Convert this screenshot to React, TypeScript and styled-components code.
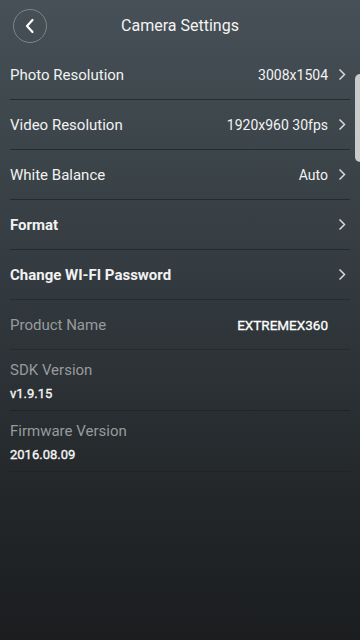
import * as React from 'react';
import styled, { createGlobalStyle } from 'styled-components';

const GlobalStyle = createGlobalStyle`
  html, body {
    margin: 0;
    padding: 0;
    background: #1c1e20;
  }
  body {
    font-family: Roboto, "Noto Sans", sans-serif;
  }
`

const Screen = styled.div`
  position: relative;
  width: 360px;
  height: 640px;
  overflow: hidden;
  background: linear-gradient(180deg, #465056 0%, #353d42 40%, #24282b 75%, #1b1d1f 100%);
  color: #f2f2f2;
`

const Header = styled.div`
  height: 50px;
  display: flex;
  align-items: center;
  justify-content: center;
  position: relative;
`

const BackButton = styled.div`
  position: absolute;
  left: 13px;
  top: 9px;
  width: 32px;
  height: 32px;
  border-radius: 50%;
  border: 1px solid #7d8589;
  display: flex;
  align-items: center;
  justify-content: center;
`

const Title = styled.div`
  font-size: 16px;
  color: #f4f4f4;
`

const List = styled.div`
  display: flex;
  flex-direction: column;
  padding: 0 10px;
`

const Row = styled.div`
  height: 50px;
  display: flex;
  align-items: center;
  border-bottom: 1px solid #262b2e;
  box-sizing: border-box;
`

const Label = styled.div<{ $bold?: boolean; $muted?: boolean }>`
  flex: 1;
  font-size: 15px;
  font-weight: ${p => (p.$bold ? 700 : 400)};
  color: ${p => (p.$muted ? '#979b9e' : '#f2f2f2')};
`

const Value = styled.div<{ $strong?: boolean }>`
  font-size: ${p => (p.$strong ? '13.5px' : '14px')};
  font-weight: 400;
  color: ${p => (p.$strong ? '#ffffff' : '#f2f2f2')};
  -webkit-text-stroke: ${p => (p.$strong ? '0.3px #ffffff' : '0')};
  margin-right: ${p => (p.$strong ? '22px' : '0')};
`

const Chevron = styled.div`
  width: 22px;
  display: flex;
  justify-content: flex-end;
  padding-right: 4px;
  box-sizing: border-box;
`

const InfoBlock = styled.div`
  height: 61px;
  display: flex;
  flex-direction: column;
  gap: 7px;
  padding-top: 11px;
  border-bottom: 1px solid #202427;
  box-sizing: border-box;

  ${Label} {
    flex: none;
  }
`

const InfoValue = styled.div`
  font-size: 13px;
  font-weight: 400;
  color: #f6f6f6;
  -webkit-text-stroke: 0.35px #f6f6f6;
`

const EdgeHandle = styled.div`
  position: absolute;
  right: 0;
  top: 74px;
  width: 5px;
  height: 88px;
  background: #c9cbcc;
  border-radius: 5px 0 0 5px;
`

const ChevronIcon = () => (
  <svg width="8" height="13" viewBox="0 0 8 13">
    <path d="M1.5 1.5 L6.5 6.5 L1.5 11.5" fill="none" stroke="#d8d8d8" strokeWidth="1.5" />
  </svg>
)

const settings = [
  { label: 'Photo Resolution', value: '3008x1504' },
  { label: 'Video Resolution', value: '1920x960 30fps' },
  { label: 'White Balance', value: 'Auto' },
  { label: 'Format', bold: true },
  { label: 'Change WI-FI Password', bold: true },
]

const App: React.FunctionComponent = () => {
  return (
    <Screen>
      <GlobalStyle />
      <Header>
        <BackButton>
          <svg width="12" height="16" viewBox="0 0 12 16">
            <path d="M8.5 2 L3 8 L8.5 14" fill="none" stroke="#ffffff" strokeWidth="2.2" strokeLinecap="round" strokeLinejoin="round" />
          </svg>
        </BackButton>
        <Title>Camera Settings</Title>
      </Header>

      <List>
        {settings.map(s => (
          <Row key={s.label}>
            <Label $bold={s.bold}>{s.label}</Label>
            {s.value && <Value>{s.value}</Value>}
            <Chevron><ChevronIcon /></Chevron>
          </Row>
        ))}

        <Row>
          <Label $muted>Product Name</Label>
          <Value $strong>EXTREMEX360</Value>
        </Row>

        <InfoBlock>
          <Label $muted>SDK Version</Label>
          <InfoValue>v1.9.15</InfoValue>
        </InfoBlock>

        <InfoBlock>
          <Label $muted>Firmware Version</Label>
          <InfoValue>2016.08.09</InfoValue>
        </InfoBlock>
      </List>

      <EdgeHandle />
    </Screen>
  );
};

export default App;
